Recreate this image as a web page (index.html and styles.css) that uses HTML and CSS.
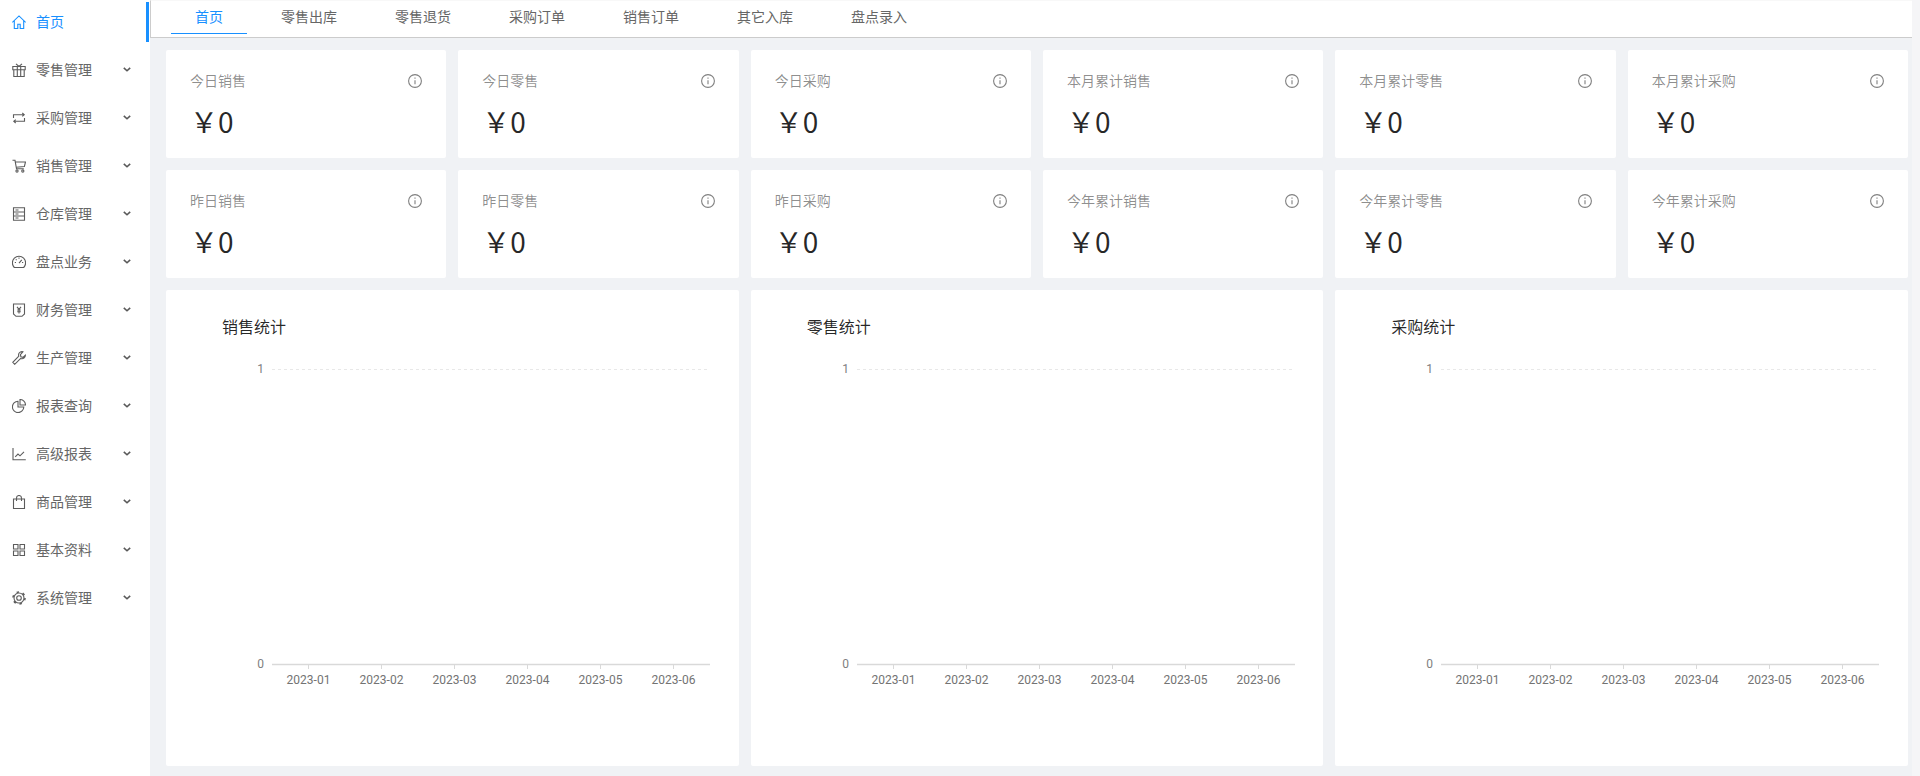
FILE: index.html
```html
<!DOCTYPE html>
<html lang="zh-CN">

<head>
    <meta charset="UTF-8">
    <meta name="viewport" content="width=device-width, initial-scale=1.0">
    <title>首页</title>
    <link rel="stylesheet" href="styles.css">
</head>

<body>
    <aside class="sidebar">
        <div class="menu-item active">
            <svg class="menu-icon" viewBox="0 0 14 14"><path d="M.3 7.400 7 .9l6.700 6.500M2.300 5.800v7.700h3.500V9.300h2.400v4.200h3.500V5.800"/></svg>
            <span>首页</span>
        </div>
        <div class="menu-item">
            <svg class="menu-icon" viewBox="0 0 14 14"><path d="M.8 3.500h12.400v3.300H.8zM1.800 6.800v6.700h10.400V6.800M5.300 3.500v10M8.700 3.500v10M4 .8l3 2.700 3-2.700"/></svg>
            <span>零售管理</span>
            <svg class="chevron" viewBox="0 0 10 6"><path d="M1 1l4 3.600L9 1"/></svg>
        </div>
        <div class="menu-item">
            <svg class="menu-icon" viewBox="0 0 14 14"><path d="M1.500 7V3.700h10.500M10.300 2l1.900 1.700-1.900 1.700M12.500 7v3.300H2M3.700 8.600 1.800 10.300 3.700 12"/></svg>
            <span>采购管理</span>
            <svg class="chevron" viewBox="0 0 10 6"><path d="M1 1l4 3.600L9 1"/></svg>
        </div>
        <div class="menu-item">
            <svg class="menu-icon" viewBox="0 0 14 14"><path d="M.5 1.300h2.500l1.500 8.500h7.300M3.300 3h10.200l-1.100 4.500-8.200.8"/><circle cx="5" cy="12" r="1.100"/><circle cx="10.800" cy="12" r="1.100"/></svg>
            <span>销售管理</span>
            <svg class="chevron" viewBox="0 0 10 6"><path d="M1 1l4 3.600L9 1"/></svg>
        </div>
        <div class="menu-item">
            <svg class="menu-icon" viewBox="0 0 14 14"><path d="M1.500.8h11v12.400h-11zM1.500 5h11M1.500 9h11M3.500 3h3M3.500 7h3M3.500 11h3"/></svg>
            <span>仓库管理</span>
            <svg class="chevron" viewBox="0 0 10 6"><path d="M1 1l4 3.600L9 1"/></svg>
        </div>
        <div class="menu-item">
            <svg class="menu-icon" viewBox="0 0 14 14"><path d="M2.300 12.500a6.600 6.600 0 1 1 9.400 0zM7 8.200 9.800 4.800M2.800 7.500h1.200M10 7.500h1.200M7 2.500v1.200M3.800 4.300l.8.800"/></svg>
            <span>盘点业务</span>
            <svg class="chevron" viewBox="0 0 10 6"><path d="M1 1l4 3.600L9 1"/></svg>
        </div>
        <div class="menu-item">
            <svg class="menu-icon" viewBox="0 0 14 14"><path d="M1.500 1h11v10l-2.500 2.300H4L1.500 11zM5 3.800l2 2.600 2-2.600M7 6.400V10.500M5.200 7h3.600M5.200 8.700h3.600"/></svg>
            <span>财务管理</span>
            <svg class="chevron" viewBox="0 0 10 6"><path d="M1 1l4 3.600L9 1"/></svg>
        </div>
        <div class="menu-item">
            <svg class="menu-icon" viewBox="0 0 14 14"><path d="M10 .6a3.400 3.400 0 0 0-3.200 4.600L.8 11.300l1.900 2 6-5.900a3.400 3.400 0 0 0 4.700-3.300l-2.500 2.200-2-.6-.5-2L10.900.8z"/></svg>
            <span>生产管理</span>
            <svg class="chevron" viewBox="0 0 10 6"><path d="M1 1l4 3.600L9 1"/></svg>
        </div>
        <div class="menu-item">
            <svg class="menu-icon" viewBox="0 0 14 14"><path d="M6 2.200a5.700 5.700 0 1 0 5.800 5.800H6zM8 .5v5.500h5.500A5.500 5.500 0 0 0 8 .5z"/></svg>
            <span>报表查询</span>
            <svg class="chevron" viewBox="0 0 10 6"><path d="M1 1l4 3.600L9 1"/></svg>
        </div>
        <div class="menu-item">
            <svg class="menu-icon" viewBox="0 0 14 14"><path d="M1 1V12.800h12.800M3.200 9.800 6 7l2 1.800 4-4"/></svg>
            <span>高级报表</span>
            <svg class="chevron" viewBox="0 0 10 6"><path d="M1 1l4 3.600L9 1"/></svg>
        </div>
        <div class="menu-item">
            <svg class="menu-icon" viewBox="0 0 14 14"><path d="M1.500 4h11v9.500h-11zM4.500 6V3a2.500 2.500 0 0 1 5 0v3"/></svg>
            <span>商品管理</span>
            <svg class="chevron" viewBox="0 0 10 6"><path d="M1 1l4 3.600L9 1"/></svg>
        </div>
        <div class="menu-item">
            <svg class="menu-icon" viewBox="0 0 14 14"><path d="M1.500 1.500h4.500v4.500H1.500zM8 1.500h4.500v4.500H8zM1.500 8h4.500v4.500H1.500zM8 8h4.500v4.500H8z"/></svg>
            <span>基本资料</span>
            <svg class="chevron" viewBox="0 0 10 6"><path d="M1 1l4 3.600L9 1"/></svg>
        </div>
        <div class="menu-item">
            <svg class="menu-icon" viewBox="0 0 14 14"><circle cx="7" cy="7" r="2.300"/><circle cx="7" cy="7" r="5"/><circle class="gear-teeth" cx="7" cy="7" r="6"/></svg>
            <span>系统管理</span>
            <svg class="chevron" viewBox="0 0 10 6"><path d="M1 1l4 3.600L9 1"/></svg>
        </div>
    </aside>

    <main class="main">
        <nav class="tabs">
            <div class="tab active">首页</div>
            <div class="tab">零售出库</div>
            <div class="tab">零售退货</div>
            <div class="tab">采购订单</div>
            <div class="tab">销售订单</div>
            <div class="tab">其它入库</div>
            <div class="tab">盘点录入</div>
        </nav>

        <div class="content">
            <section class="stats">
                <div class="stat-card"><div class="stat-head"><span>今日销售</span><svg class="info" viewBox="0 0 14 14"><circle cx="7" cy="7" r="6.400"/><path d="M7 6.200v4M7 3.600v1.200"/></svg></div><div class="stat-value">￥0</div></div>
                <div class="stat-card"><div class="stat-head"><span>今日零售</span><svg class="info" viewBox="0 0 14 14"><circle cx="7" cy="7" r="6.400"/><path d="M7 6.200v4M7 3.600v1.200"/></svg></div><div class="stat-value">￥0</div></div>
                <div class="stat-card"><div class="stat-head"><span>今日采购</span><svg class="info" viewBox="0 0 14 14"><circle cx="7" cy="7" r="6.400"/><path d="M7 6.200v4M7 3.600v1.200"/></svg></div><div class="stat-value">￥0</div></div>
                <div class="stat-card"><div class="stat-head"><span>本月累计销售</span><svg class="info" viewBox="0 0 14 14"><circle cx="7" cy="7" r="6.400"/><path d="M7 6.200v4M7 3.600v1.200"/></svg></div><div class="stat-value">￥0</div></div>
                <div class="stat-card"><div class="stat-head"><span>本月累计零售</span><svg class="info" viewBox="0 0 14 14"><circle cx="7" cy="7" r="6.400"/><path d="M7 6.200v4M7 3.600v1.200"/></svg></div><div class="stat-value">￥0</div></div>
                <div class="stat-card"><div class="stat-head"><span>本月累计采购</span><svg class="info" viewBox="0 0 14 14"><circle cx="7" cy="7" r="6.400"/><path d="M7 6.200v4M7 3.600v1.200"/></svg></div><div class="stat-value">￥0</div></div>
                <div class="stat-card"><div class="stat-head"><span>昨日销售</span><svg class="info" viewBox="0 0 14 14"><circle cx="7" cy="7" r="6.400"/><path d="M7 6.200v4M7 3.600v1.200"/></svg></div><div class="stat-value">￥0</div></div>
                <div class="stat-card"><div class="stat-head"><span>昨日零售</span><svg class="info" viewBox="0 0 14 14"><circle cx="7" cy="7" r="6.400"/><path d="M7 6.200v4M7 3.600v1.200"/></svg></div><div class="stat-value">￥0</div></div>
                <div class="stat-card"><div class="stat-head"><span>昨日采购</span><svg class="info" viewBox="0 0 14 14"><circle cx="7" cy="7" r="6.400"/><path d="M7 6.200v4M7 3.600v1.200"/></svg></div><div class="stat-value">￥0</div></div>
                <div class="stat-card"><div class="stat-head"><span>今年累计销售</span><svg class="info" viewBox="0 0 14 14"><circle cx="7" cy="7" r="6.400"/><path d="M7 6.200v4M7 3.600v1.200"/></svg></div><div class="stat-value">￥0</div></div>
                <div class="stat-card"><div class="stat-head"><span>今年累计零售</span><svg class="info" viewBox="0 0 14 14"><circle cx="7" cy="7" r="6.400"/><path d="M7 6.200v4M7 3.600v1.200"/></svg></div><div class="stat-value">￥0</div></div>
                <div class="stat-card"><div class="stat-head"><span>今年累计采购</span><svg class="info" viewBox="0 0 14 14"><circle cx="7" cy="7" r="6.400"/><path d="M7 6.200v4M7 3.600v1.200"/></svg></div><div class="stat-value">￥0</div></div>
            </section>

            <section class="charts">
                <div class="chart-card">
                    <h3>销售统计</h3>
                    <div class="chart" data-chart></div>
                </div>
                <div class="chart-card">
                    <h3>零售统计</h3>
                    <div class="chart" data-chart></div>
                </div>
                <div class="chart-card">
                    <h3>采购统计</h3>
                    <div class="chart" data-chart></div>
                </div>
            </section>
        </div>
    </main>

    <div class="scroll-strip"></div>

    <script>
        const months = ["2023-01", "2023-02", "2023-03", "2023-04", "2023-05", "2023-06"];
        const left = 106;
        const step = 73;

        let svg = `<svg viewBox="0 0 573 360" width="573" height="360">`;
        svg += `<line class="grid-line" x1="${left}" y1="19.5" x2="${left + step * 6}" y2="19.5"/>`;
        svg += `<line class="axis-line" x1="${left}" y1="314.500" x2="${left + step * 6}" y2="314.500"/>`;
        svg += `<text class="y-label" x="98" y="23">1</text>`;
        svg += `<text class="y-label" x="98" y="318">0</text>`;
        for (let i = 0; i < months.length; i++) {
            const x = left + step * i + 36.5;
            svg += `<line class="tick-line" x1="${x}" y1="315" x2="${x}" y2="319"/>`;
            svg += `<text class="x-label" x="${x}" y="334">${months[i]}</text>`;
        }
        svg += `</svg>`;

        document.querySelectorAll("[data-chart]").forEach(chart => {
            chart.innerHTML = svg;
        });
    </script>
</body>

</html>
```

FILE: styles.css
```css
html,
body {
    height: 100%;
}

body {
    margin: 0;
    display: flex;
    height: 100vh;
    overflow: hidden;
    background-color: #fff;
    color: rgba(0, 0, 0, 0.65);
    font-family: "Noto Sans CJK SC", "Noto Sans", sans-serif;
    font-size: 14px;
}

.sidebar {
    flex: 0 0 150px;
    box-sizing: border-box;
    padding: 2px 1px 0 0;
    background-color: #fff;
    box-shadow: 2px 0 8px rgba(29, 35, 41, 0.05);
    position: relative;
    z-index: 1;
}

.menu-item {
    display: flex;
    align-items: center;
    height: 40px;
    margin-bottom: 8px;
    padding-left: 12px;
    box-sizing: border-box;
    color: #666;
}

.menu-item span {
    margin-left: 10px;
    padding-bottom: 2px;
}

.menu-item.active {
    color: #1890ff;
    border-right: 3px solid #1890ff;
}

.menu-icon {
    width: 14px;
    height: 14px;
    fill: none;
    stroke: #5c5c5c;
    stroke-width: 1.1;
}

.menu-item.active .menu-icon {
    stroke: #1890ff;
}

.gear-teeth {
    stroke-width: 1.6;
    stroke-dasharray: 2.4 3.88;
}

.chevron {
    width: 8px;
    height: 5px;
    margin-left: auto;
    margin-right: 18px;
    margin-top: -1px;
    fill: none;
    stroke: #595959;
    stroke-width: 2;
}

.main {
    flex: 1;
    min-width: 0;
    display: flex;
    flex-direction: column;
    background-color: #f0f2f5;
    position: relative;
    z-index: 2;
}

.tabs {
    display: flex;
    height: 38px;
    box-sizing: border-box;
    padding: 1px 0 0 20px;
    background-color: #fff;
    border-left: 1px solid #ccc;
    border-bottom: 1px solid #ccc;
    border-top: 1px solid #f8f8f8;
}

.tab {
    height: 32px;
    line-height: 28px;
    padding: 0 24px;
    margin-right: 10px;
    box-sizing: border-box;
    color: #666;
}

.tab.active {
    color: #1890ff;
    border-bottom: 1px solid #1890ff;
}

.content {
    flex: 1;
    min-height: 0;
    display: flex;
    flex-direction: column;
    gap: 12px;
    padding: 12px 4px 10px 16px;
}

.stats {
    display: grid;
    grid-template-columns: repeat(6, 1fr);
    gap: 12px;
}

.stat-card {
    height: 108px;
    box-sizing: border-box;
    padding: 20px 24px 0;
    background-color: #fff;
    border-radius: 2px;
}

.stat-head {
    display: flex;
    align-items: center;
    justify-content: space-between;
    height: 22px;
    color: rgba(0, 0, 0, 0.45);
}

.stat-head span {
    padding-bottom: 2px;
}

.info {
    width: 14px;
    height: 14px;
    fill: none;
    stroke: #808080;
    stroke-width: 1.1;
}

.stat-value {
    margin-top: 9px;
    line-height: 40px;
    font-size: 28px;
    font-weight: 400;
    color: rgba(0, 0, 0, 0.85);
}

.charts {
    flex: 1;
    min-height: 0;
    display: grid;
    grid-template-columns: repeat(3, 1fr);
    gap: 12px;
}

.chart-card {
    background-color: #fff;
    border-radius: 2px;
    overflow: hidden;
}

.chart-card h3 {
    margin: 24px 0 12px 56px;
    font-size: 16px;
    line-height: 24px;
    font-weight: 400;
    color: rgba(0, 0, 0, 0.85);
}

.chart svg {
    display: block;
}

.grid-line {
    stroke: #e8e8e8;
    stroke-dasharray: 3 3;
}

.axis-line {
    stroke: #d9d9d9;
    stroke-width: 1.6;
}

.tick-line {
    stroke: #d9d9d9;
}

.y-label {
    fill: #808080;
    font-family: Roboto, sans-serif;
    font-size: 12px;
    text-anchor: end;
}

.x-label {
    fill: #737373;
    font-family: Roboto, sans-serif;
    font-size: 12px;
    text-anchor: middle;
}

.scroll-strip {
    flex: 0 0 8px;
    background-color: #f5f5f7;
}
```
